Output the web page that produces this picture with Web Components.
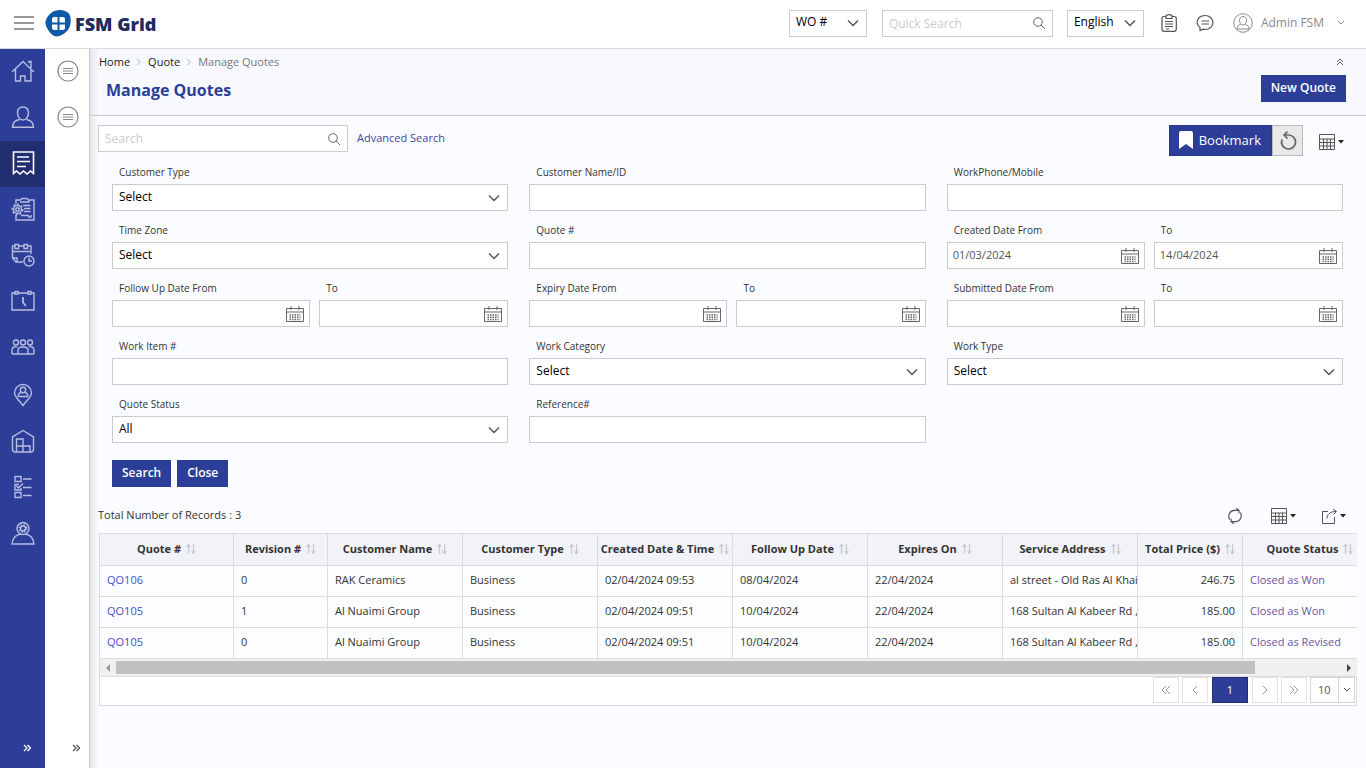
<!DOCTYPE html>
<html lang="en">
<head>
<meta charset="utf-8">
<meta name="viewport" content="width=device-width, initial-scale=1">
<title>Manage Quotes - FSM Grid</title>
<style>
html,body{margin:0;height:100%}
body{font:12px/16px "Open Sans","Noto Sans",sans-serif;color:#333;background:#fbfcff;
--brand:#2c3e98;--brand-dark:#202e70;--line:#c9cbcf;--soft:#dadce0;--link:#3d44a0}
</style>
</head>
<body>
<fsm-app></fsm-app>
<script>
const base = `*{box-sizing:border-box}button,input,select{font:inherit;margin:0;border-radius:0}button{padding:0;border:0;background:none;color:inherit;cursor:pointer}a{text-decoration:none;color:inherit}`;
function define(name, css, html) {
  customElements.define(name, class extends HTMLElement {
    constructor() {
      super();
      const root = this.attachShadow({ mode: 'open' });
      root.innerHTML = `<style>${base}${css}</style>${typeof html === 'function' ? html(this) : html}`;
    }
  });
}

/* name: [width, height, drawing] */
const icons = {
  home: [24, 24, '<path d="M1 13 12 2.500 23 13M4.500 10.500V22H9.500V17H14V22H20V10.500M18 4V2.500H20V9"/>'],
  person: [24, 24, '<path d="M12 2C8.500 2 6.500 4.500 6.500 8S9 15 12 15 17.500 11.500 17.500 8 15.500 2 12 2ZM8.500 14.500C4 15.500 2 17 1.500 22.300H22.500C22 17 20 15.500 15.500 14.500"/>'],
  receipt: [24, 24, '<path stroke-width="1.600" d="M2.500 1H22.500V22.500L19.500 20 16 23 12.500 20 9 23 5.500 20 2.500 22.500ZM6 6H18M6 10.500H19M6 15.500H15"/>'],
  job: [24, 24, '<path d="M5 7V3H9.500L11 1.500H16L17.500 3H23V23H5V18M9 5H18V3M12 8.500H19.500M13 11.500H19.500M13 14.500H19.500M10 18.500H18M20 18V20H17"/><circle cx="6.500" cy="12.500" r="4"/><circle cx="6.500" cy="12.500" r="1.800"/><circle cx="6.500" cy="12.500" r="5.300" stroke-dasharray="2 2"/>'],
  calclock: [24, 24, '<path d="M4 3H1.500V15L5 19H12M8 3H13M17 3H20V11M2 8.500H19M4 1.500H7.500V5.500H4ZM13 1.500H16.500V5.500H13ZM2 15H6V19M5 19 11 19"/><circle cx="18" cy="18" r="5"/><path d="M18 14.500V18H21"/>'],
  schedule: [24, 24, '<path d="M4 4H1V21H23V4H20M7 4H17M4 2.500H7V5H4ZM17 2.500H20V5H17Z"/><path stroke-width="1.800" d="M12 8V13.500L15 17"/>'],
  team: [24, 24, '<circle cx="5" cy="7.500" r="2.500"/><circle cx="12" cy="7.500" r="2.500"/><circle cx="19" cy="7.500" r="2.500"/><path d="M1 19V15C1 12 4 11 6 12M23 19V15C23 12 20 11 18 12M7 19V15C7 11 17 11 17 15V19M1 19H23"/>'],
  pin: [24, 24, '<path d="M12 22.500C9 18 3.500 14 3.500 10A8.500 8.500 0 0 1 20.500 10C20.500 14 15 18 12 22.500Z"/><circle cx="12" cy="7" r="2.700"/><path d="M9.700 9.500C7 10.500 7 13.500 7.500 13.500H16.500C17 13.500 17 10.500 14.300 9.500"/>'],
  building: [24, 24, '<path d="M4 23H20Q22.500 23 22.500 20V8L12 1.500 1.500 8V20Q1.500 23 4 23ZM5.500 23V10H12V17H19V23M12 17V23M5.500 17H12"/>'],
  checks: [24, 24, '<path d="M4 1.500H10V6.500H4ZM4 17.500H10V22.500H4ZM10 13V15H4V9.500H8M5.500 11 7.500 13 12 8.500M12 4H20.500M12 12.500H20.500M12 20.500H20.500"/>'],
  support: [24, 24, '<path d="M1 23C1.500 17 5 13 12 13S22.500 17 23 23Z"/><circle cx="12" cy="7.500" r="6" fill="#2c3e98"/><circle cx="12" cy="7.500" r="2.500"/><circle cx="12" cy="7.500" r="3.800" stroke-dasharray="1.500 1.500"/>'],
  burger: [20, 14, '<path stroke-width="1.600" d="M0 1H20M0 7H20M0 13H20"/>'],
  lines: [22, 22, '<circle cx="11" cy="11" r="10"/><path d="M6 8.500H16M6 11H16M6 13.500H16"/>'],
  dbl: [8, 8, '<path stroke-width="1.300" d="M1 1 4 4 1 7M4.500 1 7.500 4 4.500 7"/>'],
  dblleft: [10, 10, '<path d="M5 1 1 5 5 9M9 1 5 5 9 9"/>'],
  dblright: [10, 10, '<path d="M1 1 5 5 1 9M5 1 9 5 5 9"/>'],
  left: [10, 10, '<path d="M7 1 3 5 7 9"/>'],
  right: [10, 10, '<path d="M3 1 7 5 3 9"/>'],
  up2: [8, 8, '<path d="M1 4 4 1 7 4M1 7 4 4 7 7"/>'],
  down: [12, 8, '<path stroke-width="1.500" d="M1 1.500 6 6.500 11 1.500"/>'],
  down2: [8, 6, '<path d="M1 1 4 4 7 1"/>'],
  crumb: [6, 8, '<path d="M1 1 4.500 4 1 7"/>'],
  search: [12, 12, '<circle cx="5" cy="5" r="4.300"/><path d="M8 8 12 12"/>'],
  clip: [18, 18, '<path stroke-width="1.200" d="M6 2.500H4Q2 2.500 2 4.500V15Q2 17.300 4 17.300H14Q16.300 17.300 16.300 15V4.500Q16.300 2.500 14 2.500H12M6 1.500Q9 -.300 12 1.500V4.500H6ZM5 7.500H13M5 10H13M5 12.500H13M6 15H9"/>'],
  chat: [18, 18, '<path stroke-width="1.200" d="M4 16.500V13.500C2 12 1 10.500 1 8.500C1 4.500 4.500 1.500 9 1.500S17 4.500 17 8.500 13.500 15.500 9 15.500L7 15.200ZM5.500 7H13M5.500 10H13"/>'],
  user: [20, 20, '<circle cx="10" cy="10" r="9.300"/><path d="M10 3.500C7.500 3.500 6.500 5.500 6.500 7.500S8 12 10 12 13.500 9.500 13.500 7.500 12.500 3.500 10 3.500ZM7.500 11.500C5.500 12 4 13 4 16H16C16 13 14.500 12 12.500 11.500"/>'],
  bookmark: [14, 18, '<path fill="#fff" stroke="none" d="M0 2Q0 0 2 0H12Q14 0 14 2V18L7 13 0 18Z"/>'],
  reset: [18, 20, '<path stroke-width="1.700" d="M9.500 4A7 7 0 1 1 3 8.500M9.500 4H4.500M8.500 .700 5 4 8.500 7.500"/>'],
  grid: [16, 16, '<path d="M.500 .500H15.500V15.500H.500ZM.500 5H15.500M.500 8.500H15.500M.500 12H15.500M4.500 5V15M8 5V15M11.500 5V15"/>'],
  caret: [6, 4, '<path fill="#222" stroke="none" d="M0 0H6L3 3.500Z"/>'],
  refresh: [16, 16, '<path stroke-width="1.200" d="M2.500 11.500C.500 7 3 2.300 7.500 2.300H11.500M9 .300 12 2.300 12 5.500M13.500 4.500C15.500 9 13 13.700 8.500 13.700H4.500M7 15.700 4 13.700 4 10.500"/>'],
  share: [18, 16, '<path d="M7 3.500H1.500V15.500H13.500V9M6 10.500C6 6 9 3.500 15 3.500M12 1 15.500 3.500 12.500 6.500"/>'],
  calendar: [18, 16, '<path d="M.500 2.500H17.500V15.500H.500ZM.500 6H17.500M5 0V4M13 0V4"/><path stroke-width="1.500" stroke-dasharray="1.500 1" d="M3.500 9H14.500M3.500 11.300H14.500M3.500 13.500H14.500"/>'],
  sort: [10, 12, '<path stroke-width="1.200" d="M2.500 11V2M.500 4 2.500 1.500 4.500 4M7.500 1V10M5.500 8 7.500 10.500 9.500 8"/>'],
  logo: [26, 28, '<path fill="#0f5aa8" stroke="none" d="M10 1.800C16-.500 24 2 25.200 7C26 11 26.300 17 22.500 21.500C18 27 11 29 7.500 26C4 23 0 17 .500 13C1 9 5 3.500 10 1.800Z"/><path fill="#fff" stroke="none" d="M9 8H12.500V13.500H7V10Q7 8 9 8ZM14.500 8H18Q20 8 20 10V13.500H14.500ZM7 15.500H12.500V21H9Q7 21 7 19ZM14.500 15.500H20V19Q20 21 18 21H14.500Z"/>']
};
define('fsm-icon', `:host{display:inline-flex;flex:none}svg{display:block;fill:none;stroke:currentColor;stroke-width:var(--stroke,1)}`, el => {
  const [w, h, d] = icons[el.getAttribute('name')];
  return `<svg width="${w}" height="${h}" viewBox="0 0 ${w} ${h}" aria-hidden="true">${d}</svg>`;
});
const icon = n => `<fsm-icon name="${n}"></fsm-icon>`;
const labelCss = 'label{display:block;font-size:10px;padding-left:7px;height:18px;line-height:18px;margin-bottom:3px;color:#333}';

/* Drop-down: options are given as a "|" separated list */
define('fsm-select', `:host{display:block}${labelCss}
.box{position:relative;display:grid;align-items:center;height:27px}
select{appearance:none;width:100%;height:27px;border:1px solid var(--line);background:#fff;color:#000;padding:0 24px 2px 6px}
fsm-icon{position:absolute;right:8px;color:#555;pointer-events:none}`, el => {
  const l = el.getAttribute('label');
  return `${l ? `<label for="c">${l}</label>` : ''}<div class="box"><select id="c" aria-label="${l || el.getAttribute('hint')}">${el.getAttribute('options').split('|').map(o => `<option>${o}</option>`).join('')}</select>${icon('down')}</div>`;
});

define('fsm-text', `:host{display:block}${labelCss}
.box{position:relative;display:grid;align-items:center}
input{width:100%;height:27px;border:1px solid var(--line);background:#fff;color:#555;padding:0 26px 0 6px;outline:0}
.date{font-size:11px;padding:0 26px 2px 5px}input::placeholder{color:#ccc;opacity:1}
fsm-icon{position:absolute;right:8px;color:#666}:host([icon=calendar]) fsm-icon{right:6px}`, el => {
  const l = el.getAttribute('label'), i = el.getAttribute('icon'), p = el.getAttribute('placeholder') || '';
  return `${l ? `<label for="c">${l}</label>` : ''}<div class="box"><input id="c" type="text" class="${i === 'calendar' ? 'date' : ''}" value="${el.getAttribute('value') || ''}" placeholder="${p}" aria-label="${l || p}">${i ? icon(i) : ''}</div>`;
});

define('fsm-button', `:host{display:inline-block}button{background:var(--brand);color:#fff;font-weight:600;height:27px;padding:0 10px 2px;display:block}`, '<button type="button"><slot></slot></button>');

define('app-header', `:host{display:flex;align-items:center;height:49px;padding:0 21px 2px 14px;background:#fff;border-bottom:1px solid #d9dbdd;color:#777}
.brand{display:flex;align-items:center;gap:4px;margin:0 auto 0 11px;font:900 18px/24px "Noto Sans","Open Sans",sans-serif;color:#202a5e}.brand span{padding-top:2px}
.wo{width:78px;margin-right:15px}.quick{width:171px;margin-right:14px}.lang{width:77px;margin-right:16px}
button{display:flex;align-items:center}.clip{margin-right:18px;color:#555}.chat{margin-right:19px;color:#555}.user{gap:8px;color:#8a8a8a}.user fsm-icon:last-child{margin-left:5px}`,
`<button aria-label="Menu">${icon('burger')}</button><a class="brand" href="#">${icon('logo')}<span>FSM Grid</span></a>
<fsm-select class="wo" hint="Record type" options="WO #"></fsm-select><fsm-text class="quick" placeholder="Quick Search" icon="search"></fsm-text><fsm-select class="lang" hint="Language" options="English"></fsm-select>
<button class="clip" aria-label="Tasks">${icon('clip')}</button><button class="chat" aria-label="Messages">${icon('chat')}</button><button class="user">${icon('user')}<span>Admin FSM</span>${icon('down2')}</button>`);

const nav = ['home', 'person', 'receipt', 'job', 'calclock', 'schedule', 'team', 'pin', 'building', 'checks', 'support'];
define('side-nav', `:host{display:flex;flex-direction:column;width:45px;background:var(--brand);color:#b7bde0;--stroke:1.4}
a{display:grid;place-items:center;height:46px;padding-bottom:2px}.on{background:var(--brand-dark);color:#fff}.gap{margin-top:2px}
button{margin-top:auto;height:40px;padding-left:8px;color:#fff;display:grid;place-items:center}`,
`${nav.map(n => `<a href="#" aria-label="${n}" class="${n === 'receipt' ? 'on' : n === 'pin' ? 'gap' : ''}">${icon(n)}</a>`).join('')}<button aria-label="Expand menu">${icon('dbl')}</button>`);

define('side-rail', `:host{display:flex;flex-direction:column;width:45px;background:#fff;border-right:1px solid #c6c7ca;color:#888;--stroke:1.2}
a{display:grid;place-items:center;height:46px;padding:0 0 2px 2px}button{margin-top:auto;height:40px;padding-left:18px;display:grid;place-items:center;color:#555}`,
`<a href="#" aria-label="Panel 1">${icon('lines')}</a><a href="#" aria-label="Panel 2">${icon('lines')}</a><button aria-label="Expand panel">${icon('dbl')}</button>`);

define('page-heading', `:host{display:flex;justify-content:space-between;height:67px;padding:5px 20px 0 9px;border-bottom:1px solid #c6c7ca;background:#f8f9fe}
nav{display:flex;align-items:center;gap:6px;font-size:11px;color:#777}nav a{color:#222}nav fsm-icon{color:#bbb}
h1{margin:8px 0 0 7px;font-size:16px;line-height:24px;font-weight:700;color:var(--brand)}.right{display:flex;flex-direction:column;align-items:flex-end;gap:8px}.up{display:flex;padding:4px 2px 0 0;height:13px;color:#555}`,
`<div><nav aria-label="Breadcrumb"><a href="#">Home</a>${icon('crumb')}<a href="#">Quote</a>${icon('crumb')}<span>Manage Quotes</span></nav><h1>Manage Quotes</h1></div>
<div class="right"><button class="up" aria-label="Collapse">${icon('up2')}</button><fsm-button>New Quote</fsm-button></div>`);

define('quote-filters', `:host{display:block}
.bar{display:flex;align-items:center;margin:0 22px 7px 8px;height:31px}.bar fsm-text{width:250px;margin-bottom:4px}
.adv{margin:0 auto 6px 9px;font-size:11px;color:var(--link)}
.mark{display:flex;align-items:center;gap:6px;height:31px;padding:0 10px 2px 9px;background:var(--brand);color:#fff;font-size:13px;border:1px solid #28388c}
.reset{display:grid;place-items:center;width:31px;height:31px;border:1px solid #b9b9b9;background:#e8e8e8;color:#666;margin-right:16px}
.cols{display:flex;align-items:center;gap:3px;color:#555;padding-top:2px}
.grid{display:grid;grid-template-columns:repeat(3,minmax(0,1fr));gap:10px 21px;padding:0 23px 0 22px}
.pair{display:grid;grid-template-columns:22fr 21fr;gap:9px}.actions{display:flex;gap:6px;padding:17px 22px 0}`,
`<div class="bar"><fsm-text placeholder="Search" icon="search"></fsm-text><a class="adv" href="#">Advanced Search</a>
<button class="mark">${icon('bookmark')}<span>Bookmark</span></button><button class="reset" aria-label="Reset">${icon('reset')}</button><button class="cols" aria-label="Columns">${icon('grid')}${icon('caret')}</button></div>
<div class="grid">
<fsm-select label="Customer Type" options="Select"></fsm-select><fsm-text label="Customer Name/ID"></fsm-text><fsm-text label="WorkPhone/Mobile"></fsm-text>
<fsm-select label="Time Zone" options="Select"></fsm-select><fsm-text label="Quote #"></fsm-text>
<div class="pair"><fsm-text label="Created Date From" icon="calendar" value="01/03/2024"></fsm-text><fsm-text label="To" icon="calendar" value="14/04/2024"></fsm-text></div>
${['Follow Up', 'Expiry', 'Submitted'].map(t => `<div class="pair"><fsm-text label="${t} Date From" icon="calendar"></fsm-text><fsm-text label="To" icon="calendar"></fsm-text></div>`).join('')}
<fsm-text label="Work Item #"></fsm-text><fsm-select label="Work Category" options="Select"></fsm-select><fsm-select label="Work Type" options="Select"></fsm-select>
<fsm-select label="Quote Status" options="All"></fsm-select><fsm-text label="Reference#"></fsm-text></div>
<div class="actions"><fsm-button>Search</fsm-button><fsm-button>Close</fsm-button></div>`);

const cols = [['Quote #', 134], ['Revision #', 94], ['Customer Name', 135], ['Customer Type', 135], ['Created Date &amp; Time', 135], ['Follow Up Date', 135], ['Expires On', 135], ['Service Address', 135], ['Total Price ($)', 105], ['Quote Status', 135]];
const rows = [
  ['QO106', '0', 'RAK Ceramics', 'Business', '02/04/2024 09:53', '08/04/2024', '22/04/2024', 'al street - Old Ras Al Khair', '246.75', 'Closed as Won'],
  ['QO105', '1', 'Al Nuaimi Group', 'Business', '02/04/2024 09:51', '10/04/2024', '22/04/2024', '168 Sultan Al Kabeer Rd ,', '185.00', 'Closed as Won'],
  ['QO105', '0', 'Al Nuaimi Group', 'Business', '02/04/2024 09:51', '10/04/2024', '22/04/2024', '168 Sultan Al Kabeer Rd ,', '185.00', 'Closed as Revised']
];
define('quote-table', `:host{display:block;border-left:1px solid var(--soft)}.clip{overflow:hidden}
table{table-layout:fixed;border-collapse:separate;border-spacing:0;width:1278px;font-size:11px}
th,td{padding:0 7px 2px;border-right:1px solid var(--soft);border-bottom:1px solid var(--soft);overflow:hidden;white-space:nowrap;text-align:left}
th{height:33px;padding:0 2px 2px;border-top:1px solid var(--soft);background:#f2f3f9;font-weight:700;color:#333}
th span{display:flex;align-items:center;justify-content:center;gap:5px}th fsm-icon{color:#c8c8cc}
td{height:31px;background:#fcfdfe;text-overflow:clip}td:nth-child(8){padding-right:0}td:nth-child(9){text-align:right}td a{color:#6f559f}td:first-child a{color:#4a4cc8}
.scroll{display:flex;align-items:center;height:17px;background:#f0f0f0}.scroll button{width:16px;height:17px;display:grid;place-items:center}
.track{flex:1;height:13px}.thumb{width:93%;height:13px;background:#c1c1c1}
.arr{width:0;height:0;border:solid transparent;border-width:4px 0 4px 4px;border-left-color:#444}.arr.l{border-width:4px 4px 4px 0;border-right-color:#999}`,
`<div class="clip"><table><colgroup>${cols.map(c => `<col style="width:${c[1]}px">`).join('')}</colgroup><thead><tr>${cols.map(c => `<th scope="col"><span>${c[0]}${icon('sort')}</span></th>`).join('')}</tr></thead>
<tbody>${rows.map(r => `<tr>${r.map((v, i) => `<td>${i === 0 || i === 9 ? `<a href="#">${v}</a>` : v}</td>`).join('')}</tr>`).join('')}</tbody></table></div>
<div class="scroll"><button aria-label="Scroll left"><span class="arr l"></span></button><div class="track"><div class="thumb"></div></div><button aria-label="Scroll right"><span class="arr"></span></button></div>`);

define('quote-pager', `:host{display:flex;justify-content:flex-end;align-items:center;gap:3px;height:30px;padding:0 1px 2px 0;background:#fff;border:1px solid var(--soft);font-size:11px}
button{display:grid;place-items:center;width:26px;height:26px;border:1px solid #e2e2e4;color:#999}.on{width:36px;background:var(--brand);border-color:var(--brand-dark);color:#fff;margin:0 1px}
.size{position:relative;display:grid;align-items:center;width:45px;height:26px;border:1px solid #d3d4d8}
select{appearance:none;border:0;background:none;width:100%;height:24px;padding:0 0 0 7px;color:#555}
.size span{position:absolute;right:0;width:16px;height:24px;border-left:1px solid #d3d4d8;display:grid;place-items:center;pointer-events:none;color:#555;overflow:hidden}`,
`<button aria-label="First page">${icon('dblleft')}</button><button aria-label="Previous page">${icon('left')}</button><button class="on" aria-current="page">1</button><button aria-label="Next page">${icon('right')}</button><button aria-label="Last page">${icon('dblright')}</button>
<div class="size"><select aria-label="Rows per page"><option>10</option></select><span><fsm-icon name="down2"></fsm-icon></span></div>`);

define('quote-results', `:host{display:block;padding:16px 9px 0}
.bar{display:flex;align-items:center;height:26px;margin:0 11px 4px -1px;color:#333}.bar span{margin-right:auto;font-size:11px;padding-bottom:2px}
.bar button{display:flex;align-items:center;gap:3px;color:#555}.bar button+button{margin-left:28px}.bar button+button+button{margin-left:25px;gap:1px}`,
`<div class="bar"><span>Total Number of Records : 3</span><button aria-label="Refresh">${icon('refresh')}</button><button aria-label="Columns">${icon('grid')}${icon('caret')}</button><button aria-label="Export">${icon('share')}${icon('caret')}</button></div><quote-table></quote-table><quote-pager></quote-pager>`);

define('fsm-app', `:host{display:flex;flex-direction:column;min-height:100vh}.body{display:flex;flex:1}
main{flex:1;min-width:0;background:linear-gradient(90deg,#e6e7ec,rgba(248,249,254,0) 9px) #fbfcff}quote-filters{padding-top:9px}
page-heading{background:linear-gradient(90deg,#e6e7ec,#f8f9fe 9px)}`,
`<app-header></app-header><div class="body"><side-nav></side-nav><side-rail></side-rail><main><page-heading></page-heading><quote-filters></quote-filters><quote-results></quote-results></main></div>`);
</script>
</body>
</html>
